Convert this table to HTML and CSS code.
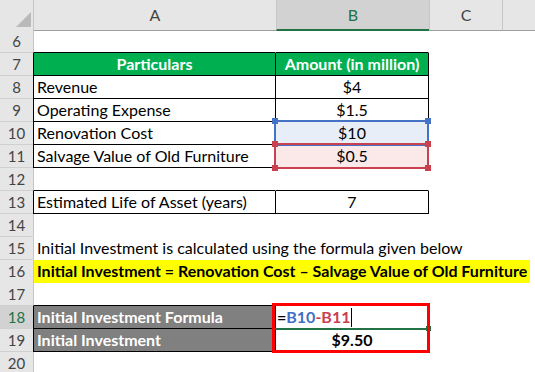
FILE: index.html
```html
<!DOCTYPE html>
<html>
<head>
<meta charset="utf-8">
<link rel="stylesheet" href="styles.css">
</head>
<body>
<div class="sheet">
  <div class="row head">
    <div class="corner"><div class="tri"></div></div>
    <div class="ch">A</div>
    <div class="ch on">B</div>
    <div class="ch">C</div>
    <div class="ch"></div>
  </div>

  <div class="row"><div class="rn">6</div><div class="c a bb"></div><div class="c b bb"></div><div class="c"></div><div class="c"></div></div>

  <div class="row"><div class="rn">7</div><div class="c a tbl green">Particulars</div><div class="c b tbl green">Amount (in million)</div><div class="c"></div><div class="c"></div></div>

  <div class="row"><div class="rn">8</div><div class="c a tbl">Revenue</div><div class="c b tbl ctr">$4</div><div class="c"></div><div class="c"></div></div>

  <div class="row"><div class="rn">9</div><div class="c a tbl">Operating Expense</div><div class="c b tbl ctr">$1.5</div><div class="c"></div><div class="c"></div></div>

  <div class="row"><div class="rn">10</div><div class="c a tbl">Renovation Cost</div><div class="c b tbl ctr ref-blue">$10</div><div class="c"></div><div class="c"></div></div>

  <div class="row"><div class="rn">11</div><div class="c a tbl">Salvage Value of Old Furniture</div><div class="c b tbl ctr ref-red">$0.5</div><div class="c"></div><div class="c"></div></div>

  <div class="row"><div class="rn">12</div><div class="c a bb"></div><div class="c b bb"></div><div class="c"></div><div class="c"></div></div>

  <div class="row"><div class="rn">13</div><div class="c a tbl">Estimated Life of Asset (years)</div><div class="c b tbl ctr">7</div><div class="c"></div><div class="c"></div></div>

  <div class="row"><div class="rn">14</div><div class="c a"></div><div class="c b"></div><div class="c"></div><div class="c"></div></div>

  <div class="row"><div class="rn">15</div><div class="c a">Initial Investment is calculated using the formula given below</div><div class="c b"></div><div class="c"></div><div class="c"></div></div>

  <div class="row"><div class="rn">16</div><div class="c a hl-cell"><span class="hl">Initial Investment = Renovation Cost – Salvage Value of Old Furniture</span></div><div class="c b"></div><div class="c"></div><div class="c"></div></div>

  <div class="row"><div class="rn">17</div><div class="c a bb"></div><div class="c b bb"></div><div class="c"></div><div class="c"></div></div>

  <div class="row"><div class="rn sel">18</div><div class="c a tbl gray act-left">Initial Investment Formula</div><div class="c b tbl bold edit"><span class="op">=</span><span class="rb">B10</span><span class="rr">-B11</span><span class="caret"></span></div><div class="c"></div><div class="c"></div></div>

  <div class="row"><div class="rn">19</div><div class="c a tbl gray">Initial Investment</div><div class="c b tbl ctr bold">$9.50</div><div class="c"></div><div class="c"></div></div>

  <div class="row"><div class="rn">20</div><div class="c a"></div><div class="c b"></div><div class="c"></div><div class="c"></div></div>

  <div class="frame frame-blue"><i class="sq tl"></i><i class="sq tr"></i></div>
  <div class="frame frame-red"><i class="sq tl"></i><i class="sq tr"></i><i class="sq bl"></i><i class="sq br"></i></div>
  <div class="active-bottom"><i class="handle"></i></div>
  <div class="redbox"></div>
</div>
</body>
</html>
```

FILE: styles.css
```css
* { box-sizing: border-box; }
html, body { margin: 0; padding: 0; }
body {
  width: 535px;
  height: 372px;
  overflow: hidden;
  background: #fff;
  font-family: Lato, "Liberation Sans", sans-serif;
  font-size: 16px;
  color: #000;
}
.sheet { position: relative; }
.row {
  display: grid;
  grid-template-columns: 33px 243px 153px 73px 1fr;
  height: 23px;
}
.row.head { height: 30px; }

.corner {
  background: #e6e6e6;
  border-bottom: 1px solid #9e9e9e;
  display: flex;
  justify-content: flex-end;
  align-items: flex-end;
  padding: 0 2px 3px 0;
}
.tri {
  width: 15px;
  height: 15px;
  background: #b9b9b9;
  clip-path: polygon(100% 0, 100% 100%, 0 100%);
}
.ch {
  background: #e6e6e6;
  border-left: 1px solid #c6c6c6;
  border-bottom: 1px solid #9e9e9e;
  text-align: center;
  line-height: 29px;
  color: #444;
  font-size: 16px;
}
.ch.on {
  background: #d2d2d2;
  color: #217346;
  border-bottom: 2px solid #217346;
}

.rn {
  background: #e6e6e6;
  border-bottom: 1px solid #d0d0d0;
  text-align: center;
  color: #444;
  line-height: 22px;
  font-size: 15px;
}
.rn.sel {
  background: #d2d2d2;
  color: #217346;
}

.c {
  border-bottom: 1px solid transparent;
  line-height: 22px;
  white-space: nowrap;
  padding: 0 3px;
}
.a {
  border-left: 1px solid #c6c6c6;
  border-right: 1px solid transparent;
}
.b { border-right: 1px solid transparent; }
.bb { border-bottom-color: #000; }
.tbl { border-bottom-color: #000; border-right-color: #000; }
.a.tbl { border-left-color: #000; }
.ctr { text-align: center; }
.bold { font-weight: 700; }

.green {
  background: #00b050;
  color: #fff;
  font-weight: 700;
  text-align: center;
}
.gray {
  background: #808080;
  color: #fff;
  font-weight: 700;
}
.act-left { border-left-color: #217346; }

.ref-blue { background: #e8eef8; }
.ref-red { background: #fbe9ea; }

.hl-cell { padding-left: 0; }
.hl {
  display: inline-block;
  height: 23px;
  background: #ffff00;
  font-weight: 700;
  padding: 0 3px;
}

.edit { padding-left: 1px; }
.op { color: #000; }
.rb { color: #3f6fc6; }
.rr { color: #c9404e; }
.caret {
  display: inline-block;
  width: 1px;
  height: 19px;
  background: #000;
  margin-left: 1px;
  vertical-align: -4px;
}

.frame {
  position: absolute;
  left: 274px;
  width: 155px;
  height: 26px;
  border: 2px solid;
}
.frame-blue { top: 120px; border-color: #4472c4; }
.frame-red { top: 143px; border-color: #c9404e; }
.sq {
  position: absolute;
  width: 6px;
  height: 6px;
}
.frame-blue .sq { background: #4472c4; }
.frame-red .sq { background: #c9404e; }
.sq.tl { left: -4px; top: -4px; }
.sq.tr { right: -4px; top: -4px; }
.sq.bl { left: -4px; bottom: -4px; }
.sq.br { right: -4px; bottom: -4px; }

.active-bottom {
  position: absolute;
  left: 275px;
  top: 328px;
  width: 154px;
  height: 2px;
  background: #217346;
}
.handle {
  position: absolute;
  right: -2px;
  top: -2px;
  width: 5px;
  height: 5px;
  background: #217346;
}
.redbox {
  position: absolute;
  left: 272px;
  top: 303px;
  width: 158px;
  height: 50px;
  border: 3px solid #ff0000;
}
```
